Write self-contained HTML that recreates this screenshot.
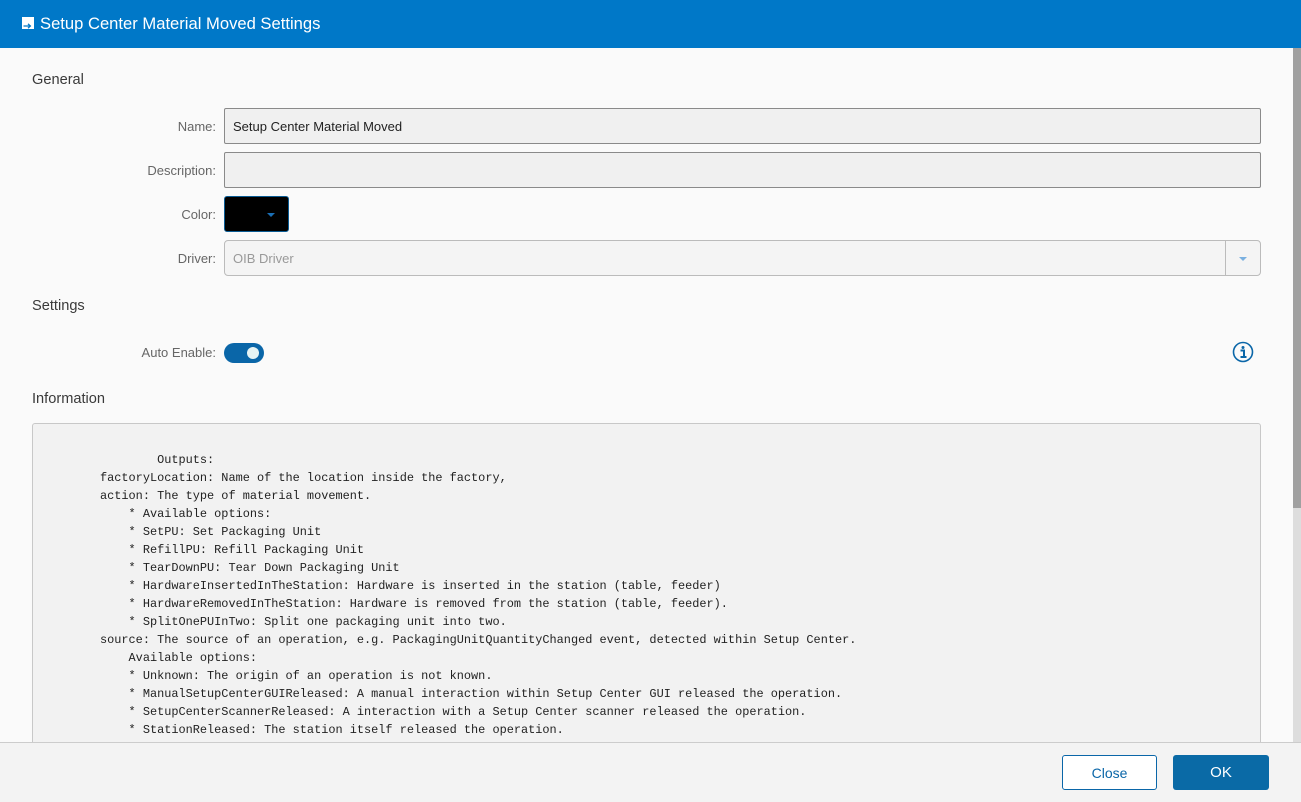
<!DOCTYPE html>
<html><head><meta charset="utf-8"><style>
*{box-sizing:border-box;margin:0;padding:0}
body{width:1301px;height:802px;overflow:hidden;background:#fafafa;font-family:"Liberation Sans",sans-serif;position:relative;color:#333}
.hdr{position:absolute;left:0;top:0;width:1301px;height:48px;background:#0078c8;color:#fff;font-size:16.6px}
.hdr .t{position:absolute;left:40px;top:14px}
.hdr .ic{position:absolute;left:22px;top:17px;width:12px;height:12px;background:#fff}
.sec{position:absolute;left:32px;font-size:14.6px;color:#3a3a3a}
.lbl{position:absolute;right:1085px;font-size:13px;color:#666;text-align:right}
.inp{position:absolute;left:224px;width:1037px;height:36px;border:1px solid #8a8a8a;background:#f0f0f0;border-radius:2px;font-size:13px;padding:10px 8px;color:#222}
.sb{position:absolute;left:1293px;top:48px;width:8px;height:694px;background:#ddd}
.sb div{width:8px;height:460px;background:#a0a0a0}
.info{position:absolute;left:32px;top:423px;width:1229px;height:330px;border:1px solid #c8c8c8;border-radius:3px;background:#f2f2f2}
pre{position:absolute;left:100px;top:451px;font-family:"Liberation Mono",monospace;font-size:11.9px;line-height:18px;color:#222}
.ft{position:absolute;left:0;top:742px;width:1301px;height:60px;background:#f3f3f3;border-top:1px solid #ccc}
.btn{position:absolute;top:755px;height:35px;border-radius:3px;font-size:14px;text-align:center;line-height:35px}
</style></head><body>
<div class="hdr"><div class="ic"><svg width="12" height="12"><path d="M1.5 6h6M6 3.8l2.4 2.2L6 8.2" stroke="#0078c8" stroke-width="1.3" fill="none"/></svg></div><div class="t">Setup Center Material Moved Settings</div></div>
<div class="sec" style="top:72px">General</div>
<div class="lbl" style="top:119px">Name:</div>
<div class="inp" style="top:108px">Setup Center Material Moved</div>
<div class="lbl" style="top:163px">Description:</div>
<div class="inp" style="top:152px"></div>
<div class="lbl" style="top:207px">Color:</div>
<div style="position:absolute;left:224px;top:196px;width:65px;height:36px;background:#000;border:1px solid #0a5c94;border-radius:3px"><div style="position:absolute;left:42px;top:16px;border-left:4px solid transparent;border-right:4px solid transparent;border-top:4px solid #1a6fb5"></div></div>
<div class="lbl" style="top:251px">Driver:</div>
<div class="inp" style="top:240px;background:#f4f4f4;border-color:#bbb;color:#999;border-radius:4px">OIB Driver<div style="position:absolute;right:34px;top:0;width:1px;height:34px;background:#bbb"></div><div style="position:absolute;right:13px;top:16px;border-left:4px solid transparent;border-right:4px solid transparent;border-top:4px solid #7ab0e0"></div></div>
<div class="sec" style="top:298px">Settings</div>
<div class="lbl" style="top:345px">Auto Enable:</div>
<div style="position:absolute;left:224px;top:343px;width:40px;height:20px;border-radius:10px;background:#0a66a8"><div style="position:absolute;left:23px;top:4px;width:12px;height:12px;border-radius:6px;background:#e6f4f4"></div></div>
<svg style="position:absolute;left:1232px;top:341px" width="22" height="22"><circle cx="11" cy="11" r="9.5" fill="none" stroke="#0a66a8" stroke-width="1.6"/><circle cx="11" cy="6.5" r="1.5" fill="#0a66a8"/><path d="M8.5 9.5h3.5v6M8.5 16h6" stroke="#0a66a8" stroke-width="2" fill="none"/></svg>
<div class="sec" style="top:391px">Information</div>
<div class="info"></div>
<pre>        Outputs:
factoryLocation: Name of the location inside the factory,
action: The type of material movement.
    * Available options:
    * SetPU: Set Packaging Unit
    * RefillPU: Refill Packaging Unit
    * TearDownPU: Tear Down Packaging Unit
    * HardwareInsertedInTheStation: Hardware is inserted in the station (table, feeder)
    * HardwareRemovedInTheStation: Hardware is removed from the station (table, feeder).
    * SplitOnePUInTwo: Split one packaging unit into two.
source: The source of an operation, e.g. PackagingUnitQuantityChanged event, detected within Setup Center.
    Available options:
    * Unknown: The origin of an operation is not known.
    * ManualSetupCenterGUIReleased: A manual interaction within Setup Center GUI released the operation.
    * SetupCenterScannerReleased: A interaction with a Setup Center scanner released the operation.
    * StationReleased: The station itself released the operation.</pre>
<div class="sb"><div></div></div>
<div class="ft"></div>
<div class="btn" style="left:1062px;width:95px;border:1px solid #0a66a8;color:#0a66a8;background:#fff">Close</div>
<div class="btn" style="left:1173px;width:96px;background:#0a6aa6;color:#fff;font-size:15px;line-height:36px">OK</div>
</body></html>
